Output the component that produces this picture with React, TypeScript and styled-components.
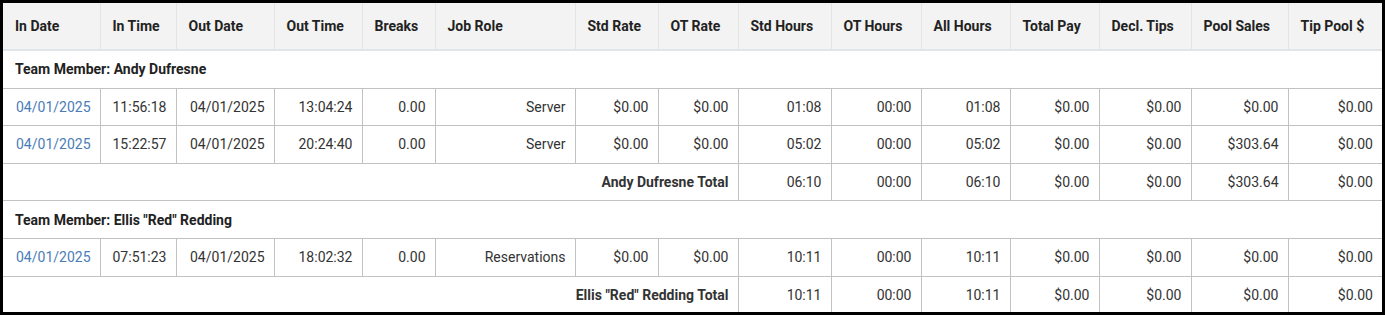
import styled, { createGlobalStyle } from 'styled-components';

const Global = createGlobalStyle`
  html, body {
    margin: 0;
    padding: 0;
    background: #ffffff;
    font-family: Roboto, "Liberation Sans", Arial, sans-serif;
  }
`;

const Frame = styled.div`
  box-sizing: border-box;
  width: 1385px;
  height: 315px;
  border: 3px solid #000;
  overflow: hidden;
  background: #fff;
`;

const Table = styled.table`
  width: 1379px;
  border-collapse: collapse;
  table-layout: fixed;
  font-size: 14px;
  color: #333;
`;

const Th = styled.th`
  height: 46px;
  padding: 0 0 0 12px;
  text-align: left;
  font-weight: 700;
  color: #222;
  background: #f3f3f3;
  border-right: 1px solid #e4e4e4;
  border-bottom: 2px solid #e1e4e8;
  white-space: nowrap;
  &:last-child {
    border-right: none;
  }
`;

const Td = styled.td<{ $link?: boolean; $bold?: boolean }>`
  height: 36.6px;
  padding: 0 9px 0 8px;
  text-align: right;
  white-space: nowrap;
  border: 1px solid #c2c2c2;
  color: ${p => (p.$link ? '#4a7db7' : '#333')};
  font-weight: ${p => (p.$bold ? 700 : 400)};
  &:first-child {
    border-left: none;
  }
  &:last-child {
    border-right: none;
  }
`;

const GroupCell = styled.td`
  height: 36.6px;
  padding: 0 12px;
  text-align: left;
  font-weight: 700;
  color: #222;
  border-top: 1px solid #c2c2c2;
  border-bottom: 1px solid #c2c2c2;
`;

const Row = styled.tr``;

const widths = [97, 76, 98, 88, 73, 140, 83, 80, 93, 90, 89, 89, 92, 97, 94];
const headers = [
  'In Date', 'In Time', 'Out Date', 'Out Time', 'Breaks', 'Job Role', 'Std Rate', 'OT Rate',
  'Std Hours', 'OT Hours', 'All Hours', 'Total Pay', 'Decl. Tips', 'Pool Sales', 'Tip Pool $',
];

type Member = {
  name: string;
  shifts: string[][];
  total: string[];
};

const members: Member[] = [
  {
    name: 'Andy Dufresne',
    shifts: [
      ['04/01/2025', '11:56:18', '04/01/2025', '13:04:24', '0.00', 'Server', '$0.00', '$0.00', '01:08', '00:00', '01:08', '$0.00', '$0.00', '$0.00', '$0.00'],
      ['04/01/2025', '15:22:57', '04/01/2025', '20:24:40', '0.00', 'Server', '$0.00', '$0.00', '05:02', '00:00', '05:02', '$0.00', '$0.00', '$303.64', '$0.00'],
    ],
    total: ['06:10', '00:00', '06:10', '$0.00', '$0.00', '$303.64', '$0.00'],
  },
  {
    name: 'Ellis "Red" Redding',
    shifts: [
      ['04/01/2025', '07:51:23', '04/01/2025', '18:02:32', '0.00', 'Reservations', '$0.00', '$0.00', '10:11', '00:00', '10:11', '$0.00', '$0.00', '$0.00', '$0.00'],
    ],
    total: ['10:11', '00:00', '10:11', '$0.00', '$0.00', '$0.00', '$0.00'],
  },
];

const App = () => (
  <Frame>
    <Global />
    <Table>
      <colgroup>
        {widths.map((w, i) => (
          <col key={i} style={{ width: w }} />
        ))}
      </colgroup>
      <thead>
        <tr>
          {headers.map(h => (
            <Th key={h}>{h}</Th>
          ))}
        </tr>
      </thead>
      <tbody>
        {members.map(m => [
          <Row key={m.name + '-g'}>
            <GroupCell colSpan={15}>Team Member: {m.name}</GroupCell>
          </Row>,
          ...m.shifts.map((s, i) => (
            <Row key={m.name + i}>
              {s.map((v, j) => (
                <Td key={j} $link={j === 0}>{v}</Td>
              ))}
            </Row>
          )),
          <Row key={m.name + '-t'}>
            <Td colSpan={8} $bold>{m.name} Total</Td>
            {m.total.map((v, j) => (
              <Td key={j}>{v}</Td>
            ))}
          </Row>,
        ])}
      </tbody>
    </Table>
  </Frame>
);

export default App;
